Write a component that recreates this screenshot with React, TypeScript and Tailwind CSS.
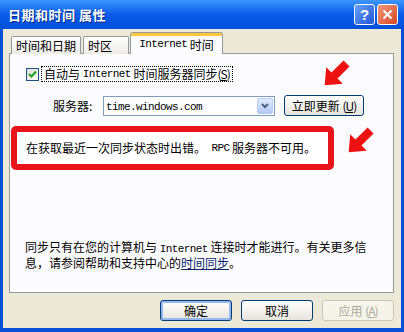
import React from 'react';

const L: React.FC<{ children: React.ReactNode }> = ({ children }) => (
  <span className="font-['Liberation_Mono',monospace] text-[11px] tracking-[-0.6px] leading-none">{children}</span>
);

const Arrow: React.FC<{ className: string }> = ({ className }) => (
  <svg className={className} width="32" height="32" viewBox="0 0 30 30">
    <g transform="rotate(135 15 15)">
      <polygon points="1,11 17,11 17,4 30,15 17,26 17,19 1,19" fill="#EE1111" />
    </g>
  </svg>
);

export default function App() {
  return (
    <div className="w-[404px] h-[332px] flex flex-col bg-[#0A4FD8] font-['Noto_Sans_CJK_SC',sans-serif] text-[12px] leading-[14px] text-black overflow-hidden">
      {/* Title bar */}
      <div className="h-[29px] flex items-center pl-[8px] pr-[6px] bg-gradient-to-b from-[#3D95FF] via-[#0A5BE8] to-[#0050DC]">
        <span className="text-white font-bold text-[13px] tracking-[0.5px] [text-shadow:1px_1px_0_#0A2A80]">日期和时间&nbsp;属性</span>
        <div className="ml-auto flex gap-[2px]">
          <div className="w-[21px] h-[21px] rounded-[3px] border border-white bg-gradient-to-br from-[#6AA0F8] to-[#2157D6] flex items-center justify-center text-white font-bold text-[15px] font-['Liberation_Sans',sans-serif]">?</div>
          <div className="w-[21px] h-[21px] rounded-[3px] border border-white bg-gradient-to-br from-[#F0967A] to-[#D6431E] flex items-center justify-center">
            <svg width="11" height="11" viewBox="0 0 11 11">
              <path d="M1.5 1.5 L9.5 9.5 M9.5 1.5 L1.5 9.5" stroke="white" strokeWidth="2" />
            </svg>
          </div>
        </div>
      </div>

      {/* Body */}
      <div className="flex-1 mx-[3px] mb-[4px] bg-[#ECE9D8] pl-[6px] pr-[7px] pt-[4px] flex flex-col">
        {/* Tabs */}
        <div className="h-[21px] flex items-end pl-[2px] relative z-10 -mb-[1px]">
          <div className="h-[18px] px-[4px] border border-b-0 border-[#919B9C] rounded-t-[2px] bg-gradient-to-b from-white to-[#ECEBE6] flex items-center">时间和日期</div>
          <div className="h-[18px] w-[46px] px-[4px] ml-[2px] border border-b-0 border-[#919B9C] rounded-t-[2px] bg-gradient-to-b from-white to-[#ECEBE6] flex items-center">时区</div>
          <div className="h-[22px] w-[93px] ml-[1px] border border-b-0 border-[#919B9C] rounded-t-[3px] bg-[#FCFCFE] flex flex-col">
            <div className="h-[3px] bg-[#FFC83C] rounded-t-[2px]" />
            <div className="flex-1 flex items-center justify-center pb-[1px]">
              <L>Internet</L>&nbsp;时间
            </div>
          </div>
        </div>

        {/* Panel */}
        <div className="h-[240px] border border-[#919B9C] bg-[#FCFCFE] relative flex flex-col">
          {/* checkbox row */}
          <div className="mt-[12px] ml-[16px] flex items-center">
            <div className="w-[13px] h-[13px] border border-[#1C5180] bg-gradient-to-br from-[#DCDCD7] to-white flex items-center justify-center">
              <svg width="9" height="9" viewBox="0 0 9 9">
                <path d="M1 4 L3.5 6.5 L8 1.5" stroke="#21A121" strokeWidth="2" fill="none" />
              </svg>
            </div>
            <div className="ml-[2px] px-[2px] h-[16px] border border-dotted border-black flex items-center">
              自动与&nbsp;<L>Internet</L>&nbsp;时间服务器同步<span className="tracking-[-1px]">(<span className="underline">S</span>)</span>
            </div>
          </div>

          {/* server row */}
          <div className="mt-[13px] ml-[43px] flex items-center">
            <span className="w-[50px]">服务器:</span>
            <div className="w-[172px] h-[20px] border border-[#7F9DB9] bg-white flex items-center">
              <span className="pl-[2px] flex-1"><L>time.windows.com</L></span>
              <div className="w-[16px] h-[16px] mr-[1px] rounded-[2px] border border-[#B9CBF3] bg-gradient-to-b from-[#E1EAFE] to-[#B4C8F5] flex items-center justify-center">
                <svg width="8" height="6" viewBox="0 0 8 6">
                  <path d="M1 1 L4 4 L7 1" stroke="#4D6185" strokeWidth="2" fill="none" />
                </svg>
              </div>
            </div>
            <div className="ml-[9px] w-[80px] h-[21px] rounded-[3px] border border-[#003C74] bg-gradient-to-b from-white to-[#E6E4DA] flex items-center justify-center">
              立即更新&nbsp;<span className="tracking-[-1px]">(<span className="underline">U</span>)</span>
            </div>
          </div>

          {/* error box */}
          <div className="mt-[10px] ml-[1px] w-[323px] h-[44px] border-[6px] border-[#E8141C] rounded-[5px] bg-white flex items-center pl-[9px]">
            在获取最近一次同步状态时出错。&nbsp;&nbsp;<L>RPC</L>&nbsp;服务器不可用。
          </div>

          {/* info text */}
          <div className="mt-auto mb-[22px] ml-[15px] w-[352px] leading-[15px]">
            同步只有在您的计算机与&nbsp;<L>Internet</L>&nbsp;连接时才能进行。有关更多信息，请参阅帮助和支持中心的<span className="underline text-[#0A246A]">时间同步</span>。
          </div>

          <Arrow className="absolute left-[310px] top-[4px]" />
          <Arrow className="absolute left-[334px] top-[71px]" />
        </div>

        {/* Buttons */}
        <div className="flex-1 flex items-center justify-end gap-[9px]">
          <div className="w-[72px] h-[21px] rounded-[3px] border border-[#003C74] bg-gradient-to-b from-white to-[#E6E4DA] shadow-[inset_0_0_0_2px_#97B8EE] flex items-center justify-center">确定</div>
          <div className="w-[72px] h-[21px] rounded-[3px] border border-[#003C74] bg-gradient-to-b from-white to-[#E6E4DA] flex items-center justify-center">取消</div>
          <div className="w-[72px] h-[21px] rounded-[3px] border border-[#C9C7BA] bg-[#F5F4EA] text-[#ACA899] flex items-center justify-center">应用&nbsp;<span className="tracking-[-1px]">(<span className="underline">A</span>)</span></div>
        </div>
      </div>
    </div>
  );
}
